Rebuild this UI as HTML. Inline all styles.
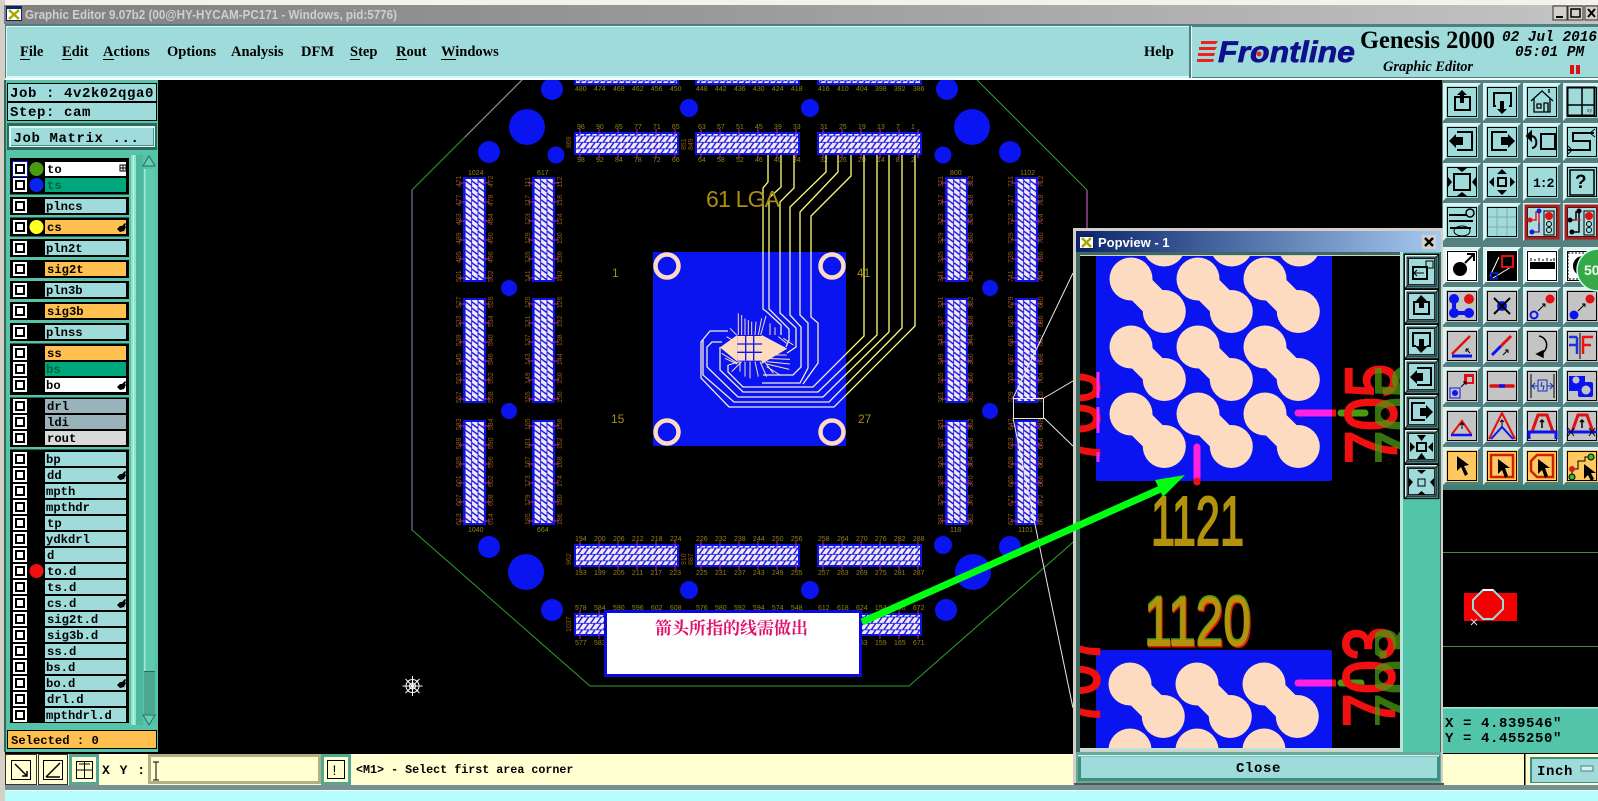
<!DOCTYPE html>
<html><head><meta charset="utf-8"><title>Graphic Editor</title>
<style>
html,body{margin:0;padding:0;background:#000;width:1598px;height:801px;overflow:hidden}
svg{display:block}
.m{font-family:"Liberation Mono",monospace;font-weight:bold;fill:#000}
.mn{font-size:14px;letter-spacing:.6px}
.r{font-size:12.2px}
.s{font-family:"Liberation Serif",serif;font-weight:bold;font-size:14.5px;fill:#000}
.l{font-family:"Liberation Sans",sans-serif;font-size:7px;fill:#8f8210}
.l2{font-family:"Liberation Sans",sans-serif;font-size:7px;fill:#8f5a10}
.lb{font-family:"Liberation Sans",sans-serif;font-size:12px;fill:#a88d10}
.pd{font-family:"Liberation Sans",sans-serif;font-size:70px}
</style></head><body>
<svg width="1598" height="801" viewBox="0 0 1598 801" xmlns="http://www.w3.org/2000/svg">
<defs>
<linearGradient id="tg" x1="0" x2="1" y1="0" y2="0"><stop offset="0" stop-color="#808080"/><stop offset=".45" stop-color="#9a9a9a"/><stop offset="1" stop-color="#c4c4c4"/></linearGradient>
<linearGradient id="pg" x1="0" x2="1" y1="0" y2="0"><stop offset="0" stop-color="#0a246a"/><stop offset="1" stop-color="#a6caf0"/></linearGradient>
<pattern id="ph" width="6.3" height="6.4" patternUnits="userSpaceOnUse" x="574" y="132"><rect width="6.3" height="6.4" fill="#0a14e8"/><path d="M-2 6L2 .4H6.600L2.600 6ZM4.300 6L8.300 .4H12.900L8.900 6Z" fill="#f6e6ec"/></pattern>
<pattern id="pv" width="6.4" height="6.3" patternUnits="userSpaceOnUse" x="463" y="177"><rect width="6.4" height="6.3" fill="#0a14e8"/><path d="M.4 -2L6 2V6.600L.4 2.600ZM.4 4.300L6 8.300V12.900L.4 8.900Z" fill="#f6e6ec"/></pattern>
<g id="hp"><rect width="105" height="23" fill="#0a14e8"/><rect x="2" y="2" width="101" height="19" fill="url(#ph)"/><path d="M6 -3V3M25 -3V3M44 -3V3M63 -3V3M82 -3V3M101 -3V3M6 20V26M25 20V26M44 20V26M63 20V26M82 20V26M101 20V26" stroke="#b020d0"/></g>
<g id="vp"><rect width="23" height="105" fill="#0a14e8"/><rect x="2" y="2" width="19" height="101" fill="url(#pv)"/><path d="M-4 6H3M-4 25H3M-4 44H3M-4 63H3M-4 82H3M-4 101H3M20 6H27M20 25H27M20 44H27M20 63H27M20 82H27M20 101H27" stroke="#b020d0"/></g>
<g id="bt"><rect width="38" height="38" fill="#4f7f7f"/><path d="M0 0H38L35 3H3V35L0 38Z" fill="#d8f4f4"/><rect x="3" y="3" width="32" height="32" fill="currentColor"/><rect x="4.500" y="4.500" width="29" height="29" fill="none" stroke="#000"/></g>
<g id="cb"><rect width="14" height="14" fill="#fff"/><rect x="3" y="3" width="8" height="8" fill="#fff" stroke="#000" stroke-width="2"/></g>
<path id="hd" d="M0 6L3 3L5 3L8 0L9 1L8 3L9 4L7 8L3 9Z" fill="#000"/>
<g id="dumb"><path d="M0 0L33 33" stroke="#fddbc0" stroke-width="29"/><circle r="21.500" fill="#fddbc0"/><circle cx="33.300" cy="32.500" r="21.500" fill="#fddbc0"/></g>
<g id="tr" fill="none" stroke-width="1.300">
<path d="M768 155V182L763 188V309L767 312L781 325V335"/>
<path d="M781 155V187L769 198V309L789 329V340L786 347"/>
<path d="M794 155V188L780 202V313L796 328V347L787 353"/>
<path d="M826 155V172L790 207V315L801 327V367L793 375H763"/>
<path d="M838 155V172L800 212V315L808 323V368L800 383H762"/>
<path d="M851 155V176L811 216V317L818 323V363L803 384"/>
<path d="M864 155V336L813 387H743L728 372V365"/>
<path d="M877 155V335L818 392H743L720 370V347"/>
<path d="M889 155V332L823 397H738L707 367V347L712 342H722"/>
<path d="M902 155V328L829 402H734L703 375V340"/>
<path d="M915 155V326L834 407H729L701 378V342L710 331H728"/>
</g>
<clipPath id="cb1"><rect x="653" y="252" width="193" height="194"/></clipPath>
<clipPath id="cp"><rect x="1080" y="256" width="320" height="492"/></clipPath>
<clipPath id="cr"><rect x="1375" y="256" width="25" height="492"/></clipPath>
</defs>

<!-- base -->
<rect width="1598" height="801" fill="#000"/>
<rect width="1598" height="5" fill="#f4f2ea"/>
<rect y="0" width="5" height="801" fill="#d4d0c8"/>
<rect x="4" y="5" width="1594" height="19" fill="url(#tg)"/>
<rect x="6" y="6" width="16" height="15" fill="#0a246a"/><rect x="7" y="9" width="14" height="11" fill="#fff"/><path d="M9 10L19 19M19 10L9 19" stroke="#a8a800" stroke-width="2.500"/>
<text x="25" y="19" font-family="Liberation Sans,sans-serif" font-weight="bold" font-size="12.500" fill="#cfcfcf" textLength="372" lengthAdjust="spacingAndGlyphs">Graphic Editor 9.07b2 (00@HY-HYCAM-PC171 - Windows, pid:5776)</text>
<g><rect x="1553" y="6" width="14" height="14" fill="#d4d0c8" stroke="#333"/><rect x="1556" y="16" width="7" height="2" fill="#000"/><rect x="1568" y="6" width="15" height="14" fill="#d4d0c8" stroke="#333"/><rect x="1571" y="9" width="9" height="8" fill="none" stroke="#000" stroke-width="1.500"/><rect x="1585" y="6" width="13" height="14" fill="#d4d0c8" stroke="#333"/><path d="M1588 9L1595 17M1595 9L1588 17" stroke="#000" stroke-width="2"/></g>

<!-- menu -->
<rect x="5" y="24" width="1593" height="56" fill="#4f7f7f"/>
<rect x="6" y="26" width="1185" height="52" fill="#dff6f6"/>
<rect x="7" y="27" width="1183" height="49" fill="#9fdbdb"/>
<rect x="1189" y="26" width="2" height="52" fill="#4f7f7f"/>
<rect x="1191" y="26" width="1" height="53" fill="#e4ffff"/>
<rect x="1192" y="27" width="406" height="50" fill="#9fdbdb"/>
<rect x="5" y="78" width="1593" height="2" fill="#f0ffff"/>
<text class="s" x="20" y="56">File</text><text class="s" x="62" y="56">Edit</text><text class="s" x="103" y="56">Actions</text><text class="s" x="167" y="56">Options</text><text class="s" x="231" y="56">Analysis</text><text class="s" x="301" y="56">DFM</text><text class="s" x="350" y="56">Step</text><text class="s" x="396" y="56">Rout</text><text class="s" x="441" y="56">Windows</text><text class="s" x="1144" y="56">Help</text>
<path d="M20 59.500h10M62 59.500h10M103 59.500h11M350 59.500h10M396 59.500h11M441 59.500h15" stroke="#000"/>
<!-- logo -->
<path d="M1201 41H1218L1216 44H1201ZM1199 47H1217L1215 50H1199ZM1198 53H1215L1214 56H1198ZM1197 59H1214L1213 62H1197Z" fill="#f02020"/>
<text x="1218" y="62" font-family="Liberation Sans,sans-serif" font-weight="bold" font-style="italic" font-size="30" fill="#10108c" stroke="#10108c" stroke-width=".7" textLength="137" lengthAdjust="spacingAndGlyphs">Frontline</text>
<circle cx="1259" cy="54" r="2.500" fill="#f02020"/>
<text x="1360" y="48" font-family="Liberation Serif,serif" font-weight="bold" font-size="25" fill="#000" textLength="135" lengthAdjust="spacingAndGlyphs">Genesis 2000</text>
<text x="1383" y="71" font-family="Liberation Serif,serif" font-weight="bold" font-style="italic" font-size="14.500" fill="#000" textLength="90" lengthAdjust="spacingAndGlyphs">Graphic Editor</text>
<text x="1502" y="41" font-family="Liberation Mono,monospace" font-weight="bold" font-style="italic" font-size="14.400" fill="#000">02 Jul 2016</text>
<text x="1515" y="56" font-family="Liberation Mono,monospace" font-weight="bold" font-style="italic" font-size="14.400" fill="#000">05:01 PM</text>
<rect x="1570" y="65" width="4" height="9" fill="#e01010"/><rect x="1576" y="65" width="4" height="9" fill="#e01010"/>

<!-- left panel -->
<rect x="5" y="80" width="153" height="672" fill="#57c4aa"/>
<rect x="4" y="80" width="2" height="672" fill="#2e6a58"/>
<rect x="7.500" y="83.500" width="149" height="18" fill="#9fdbdb" stroke="#000"/>
<rect x="7.500" y="102.500" width="149" height="18" fill="#9fdbdb" stroke="#000"/>
<text class="m mn" x="10" y="97">Job : 4v2k02qga0</text>
<text class="m mn" x="10" y="116">Step: cam</text>
<rect x="7" y="123" width="150" height="27" fill="#2e6a58"/>
<rect x="9" y="126" width="146" height="21" fill="#d8f8f8"/><rect x="11" y="128" width="143" height="18" fill="#4f8f8f"/><rect x="11" y="128" width="142" height="17" fill="#9fdbdb"/>
<text class="m mn" x="13.500" y="142">Job Matrix ...</text>

<!-- list -->
<rect x="10" y="158" width="119" height="565" fill="#000"/>
<g fill="#57c4aa"><rect x="10" y="194.500" width="119" height="2.500"/><rect x="10" y="215" width="119" height="2.500"/><rect x="10" y="236.500" width="119" height="2.500"/><rect x="10" y="257" width="119" height="3"/><rect x="10" y="278" width="119" height="3"/><rect x="10" y="299" width="119" height="3"/><rect x="10" y="320" width="119" height="3"/><rect x="10" y="341" width="119" height="2.500"/><rect x="10" y="395" width="119" height="2.500"/><rect x="10" y="447" width="119" height="2.500"/></g>
<rect x="129" y="155" width="2" height="570" fill="#57c4aa"/>
<rect x="131" y="155" width="5" height="570" fill="#8de4c8"/><rect x="133" y="155" width="1" height="570" fill="#c0f4e4"/>
<rect x="136" y="155" width="7" height="570" fill="#4fb89c"/>
<rect x="143" y="155" width="13" height="570" fill="#52c4aa"/>
<rect x="144" y="169" width="11" height="503" fill="#5fcab0"/><rect x="144" y="169" width="1.500" height="503" fill="#9aecd4"/><rect x="144" y="671" width="11" height="1.500" fill="#2e6a58"/>
<rect x="144" y="672" width="11" height="42" fill="#4aa88e"/>
<path d="M149 156L155 166H143Z" fill="#6ad0b4" stroke="#2e6a58"/>
<path d="M149 725L155 715H143Z" fill="#6ad0b4" stroke="#2e6a58"/>

<!-- rows -->
<g>
<rect x="45" y="162" width="81" height="14" fill="#fff"/><rect x="45" y="178" width="81" height="14" fill="#00a67c"/>
<rect x="45" y="199" width="81" height="14" fill="#9fdbdb"/><rect x="45" y="220" width="81" height="14" fill="#ffc050"/>
<rect x="45" y="241" width="81" height="14" fill="#9fdbdb"/><rect x="45" y="262" width="81" height="14" fill="#ffc050"/>
<rect x="45" y="283" width="81" height="14" fill="#9fdbdb"/><rect x="45" y="304" width="81" height="14" fill="#ffc050"/>
<rect x="45" y="325" width="81" height="14" fill="#9fdbdb"/>
<rect x="45" y="346" width="81" height="14" fill="#ffc050"/><rect x="45" y="362" width="81" height="14" fill="#00a67c"/><rect x="45" y="378" width="81" height="14" fill="#fff"/>
<rect x="45" y="399" width="81" height="14" fill="#9ab2ba"/><rect x="45" y="415" width="81" height="14" fill="#9ab2ba"/><rect x="45" y="431" width="81" height="14" fill="#dadada"/>
<path fill="#9fdbdb" d="M45 452h81v14h-81zM45 468h81v14h-81zM45 484h81v14h-81zM45 500h81v14h-81zM45 516h81v14h-81zM45 532h81v14h-81zM45 548h81v14h-81zM45 564h81v14h-81zM45 580h81v14h-81zM45 596h81v14h-81zM45 612h81v14h-81zM45 628h81v14h-81zM45 644h81v14h-81zM45 660h81v14h-81zM45 676h81v14h-81zM45 692h81v14h-81zM45 708h81v14h-81z"/>
</g>
<g>
<rect x="12" y="161" width="16" height="16" fill="#0016c8"/>
<use href="#cb" x="13" y="162"/><use href="#cb" x="13" y="178"/><use href="#cb" x="13" y="199"/><use href="#cb" x="13" y="220"/><use href="#cb" x="13" y="241"/><use href="#cb" x="13" y="262"/><use href="#cb" x="13" y="283"/><use href="#cb" x="13" y="304"/><use href="#cb" x="13" y="325"/><use href="#cb" x="13" y="346"/><use href="#cb" x="13" y="362"/><use href="#cb" x="13" y="378"/><use href="#cb" x="13" y="399"/><use href="#cb" x="13" y="415"/><use href="#cb" x="13" y="431"/><use href="#cb" x="13" y="452"/><use href="#cb" x="13" y="468"/><use href="#cb" x="13" y="484"/><use href="#cb" x="13" y="500"/><use href="#cb" x="13" y="516"/><use href="#cb" x="13" y="532"/><use href="#cb" x="13" y="548"/><use href="#cb" x="13" y="564"/><use href="#cb" x="13" y="580"/><use href="#cb" x="13" y="596"/><use href="#cb" x="13" y="612"/><use href="#cb" x="13" y="628"/><use href="#cb" x="13" y="644"/><use href="#cb" x="13" y="660"/><use href="#cb" x="13" y="676"/><use href="#cb" x="13" y="692"/><use href="#cb" x="13" y="708"/>
</g>
<circle cx="36.500" cy="169" r="7" fill="#4a9a10"/><circle cx="36.500" cy="185" r="7" fill="#0a24f0"/><circle cx="36.500" cy="227" r="7" fill="#ffff20"/><circle cx="36.500" cy="571" r="7" fill="#f01010"/>
<g class="m r">
<text x="47" y="173">to</text><text x="47" y="189" style="fill:#063">ts</text><text x="46" y="210">plncs</text><text x="47" y="231">cs</text><text x="46" y="252">pln2t</text><text x="47" y="273">sig2t</text><text x="46" y="294">pln3b</text><text x="47" y="315">sig3b</text><text x="46" y="336">plnss</text>
<text x="47" y="357">ss</text><text x="46" y="373" style="fill:#063">bs</text><text x="46" y="389">bo</text><text x="47" y="410">drl</text><text x="47" y="426">ldi</text><text x="47" y="442">rout</text>
<text x="46" y="463">bp</text><text x="47" y="479">dd</text><text x="46" y="495">mpth</text><text x="46" y="511">mpthdr</text><text x="47" y="527">tp</text><text x="46" y="543">ydkdrl</text><text x="47" y="559">d</text><text x="47" y="575">to.d</text><text x="47" y="591">ts.d</text><text x="47" y="607">cs.d</text><text x="47" y="623">sig2t.d</text><text x="47" y="639">sig3b.d</text><text x="47" y="655">ss.d</text><text x="46" y="671">bs.d</text><text x="46" y="687">bo.d</text><text x="47" y="703">drl.d</text><text x="46" y="719">mpthdrl.d</text>
</g>
<rect x="120" y="165" width="6" height="6" fill="none" stroke="#000"/><path d="M123 165v6M120 168h6" stroke="#000"/>
<use href="#hd" x="117" y="223"/><use href="#hd" x="117" y="381"/><use href="#hd" x="117" y="471"/><use href="#hd" x="117" y="599"/><use href="#hd" x="117" y="679"/>
<rect x="7.500" y="730.500" width="149" height="18" fill="#ffc050" stroke="#000"/>
<text class="m r" x="11" y="744">Selected : 0</text>

<!-- canvas PCB -->
<rect x="158" y="80" width="1285" height="673" fill="#000"/>
<g fill="none">
<path d="M522 80L412 190" stroke="#2fa02f"/><path d="M522 80L465 137" stroke="#a08a9a"/>
<path d="M412 190V530L590 686H909L1087 530" stroke="#2fa02f"/><path d="M412 190V530" stroke="#a080b0"/>
<path d="M977 80L1087 190" stroke="#2fa02f"/><path d="M1087 190V228" stroke="#e070e0"/>
</g>
<g fill="#0a14f0">
<circle cx="552" cy="89" r="11"/><circle cx="527" cy="127" r="18"/><circle cx="489" cy="152" r="11"/><circle cx="556" cy="155" r="8.500"/><circle cx="689" cy="108" r="9"/><circle cx="810" cy="108" r="9"/><circle cx="947" cy="89" r="11"/><circle cx="972" cy="127" r="18"/><circle cx="1010" cy="152" r="11"/><circle cx="943" cy="155" r="8.500"/>
<circle cx="489" cy="547" r="11"/><circle cx="526" cy="572" r="18"/><circle cx="552" cy="610" r="11"/><circle cx="689" cy="590" r="9"/><circle cx="810" cy="590" r="9"/><circle cx="943" cy="545" r="9"/><circle cx="946" cy="610" r="11"/><circle cx="973" cy="572" r="18"/><circle cx="1010" cy="547" r="11"/><circle cx="509" cy="288" r="8"/><circle cx="509" cy="411" r="8"/><circle cx="990" cy="288" r="8"/><circle cx="990" cy="411" r="8"/>
</g>
<rect x="158" y="78" width="1285" height="2" fill="#f0ffff"/>
<!-- pads -->
<use href="#hp" x="574" y="132"/><use href="#hp" x="695" y="132"/><use href="#hp" x="817" y="132"/>
<use href="#hp" x="574" y="544"/><use href="#hp" x="695" y="544"/><use href="#hp" x="817" y="544"/>
<use href="#hp" x="574" y="613"/><use href="#hp" x="695" y="613"/><use href="#hp" x="817" y="613"/>
<path d="M574 80h105v5h-105zM695 80h105v5h-105zM817 80h105v5h-105z" fill="#0a14e8"/><path d="M576 80h101v3h-101zM697 80h101v3h-101zM819 80h101v3h-101z" fill="url(#ph)"/>
<use href="#vp" x="463" y="177"/><use href="#vp" x="463" y="298"/><use href="#vp" x="463" y="420"/>
<use href="#vp" x="532" y="177"/><use href="#vp" x="532" y="298"/><use href="#vp" x="532" y="420"/>
<use href="#vp" x="945" y="177"/><use href="#vp" x="945" y="298"/><use href="#vp" x="945" y="420"/>
<use href="#vp" x="1015" y="177"/><use href="#vp" x="1015" y="298"/><use href="#vp" x="1015" y="420"/>
<!-- labels -->
<g class="l">
<text x="575" y="91" style="word-spacing:5.350px">480 474 468 462 456 450</text><text x="696" y="91" style="word-spacing:5.350px">448 442 436 430 424 418</text><text x="818" y="91" style="word-spacing:5.350px">416 410 404 398 392 386</text>
<text x="577" y="129" style="word-spacing:9.250px">96 90 85 77 71 65</text><text x="698" y="129" style="word-spacing:9.250px">63 57 51 45 39 33</text><text x="820" y="129" style="word-spacing:9.250px">31 25 19 13 7 1</text>
<text x="577" y="162" style="word-spacing:9.250px">98 92 84 78 72 66</text><text x="698" y="162" style="word-spacing:9.250px">64 58 52 46 40 34</text><text x="820" y="162" style="word-spacing:9.250px">32 26 20 14 8 2</text>
<text x="575" y="541" style="word-spacing:5.350px">194 200 206 212 218 224</text><text x="696" y="541" style="word-spacing:5.350px">226 232 238 244 250 256</text><text x="818" y="541" style="word-spacing:5.350px">258 264 270 276 282 288</text>
<text x="575" y="575" style="word-spacing:5.350px">193 199 205 211 217 223</text><text x="696" y="575" style="word-spacing:5.350px">225 231 237 243 249 255</text><text x="818" y="575" style="word-spacing:5.350px">257 263 269 275 281 287</text>
<text x="575" y="610" style="word-spacing:5.350px">578 584 590 596 602 608</text><text x="696" y="610" style="word-spacing:5.350px">576 580 592 594 574 548</text><text x="818" y="610" style="word-spacing:5.350px">612 618 624 154 660 672</text>
<text x="575" y="645" style="word-spacing:5.350px">577 583 589 595 601 607</text><text x="856" y="645" style="word-spacing:5.350px">153 159 165 671</text>
<text x="468" y="175">1024</text><text x="537" y="175">617</text><text x="468" y="532">1040</text><text x="537" y="532">664</text><text x="950" y="175">800</text><text x="1020" y="175">1102</text><text x="950" y="532">118</text><text x="1018" y="532">1101</text>
</g>
<g class="l2" style="word-spacing:5.350px">
<text transform="translate(461,282) rotate(-90)">501 495 489 483 477 471</text><text transform="translate(461,403) rotate(-90)">557 551 545 539 533 527</text><text transform="translate(461,525) rotate(-90)">613 607 601 595 589 583</text>
<text transform="translate(493,282) rotate(-90)">502 496 490 484 478 472</text><text transform="translate(493,403) rotate(-90)">558 552 546 540 534 528</text><text transform="translate(493,525) rotate(-90)">614 608 602 596 590 584</text>
<text transform="translate(530,282) rotate(-90)">141 135 129 123 117 111</text><text transform="translate(530,403) rotate(-90)">155 149 143 137 131 125</text><text transform="translate(530,525) rotate(-90)">185 179 173 167 161 155</text>
<text transform="translate(562,282) rotate(-90)">142 136 130 124 118 112</text><text transform="translate(562,403) rotate(-90)">156 150 144 138 132 126</text><text transform="translate(562,525) rotate(-90)">186 180 174 168 162 156</text>
<text transform="translate(943,282) rotate(-90)">341 335 329 323 317 311</text><text transform="translate(943,403) rotate(-90)">361 355 349 343 337 331</text><text transform="translate(943,525) rotate(-90)">381 375 369 363 357 351</text>
<text transform="translate(973,282) rotate(-90)">342 336 330 324 318 312</text><text transform="translate(973,403) rotate(-90)">362 356 350 344 338 332</text><text transform="translate(973,525) rotate(-90)">382 376 370 364 358 352</text>
<text transform="translate(1013,282) rotate(-90)">741 735 729 723 717 711</text><text transform="translate(1013,403) rotate(-90)">709 703 697 691 685 679</text><text transform="translate(1013,525) rotate(-90)">677 671 665 659 653 647</text>
<text transform="translate(1043,282) rotate(-90)">742 736 730 724 718 712</text><text transform="translate(1043,403) rotate(-90)">710 704 698 692 686 680</text><text transform="translate(1043,525) rotate(-90)">678 672 666 660 654 648</text>
<text transform="translate(571,148) rotate(-90)">869</text><text transform="translate(686,150) rotate(-90)">851</text><text transform="translate(693,150) rotate(-90)">849</text><text transform="translate(571,565) rotate(-90)">962</text><text transform="translate(686,565) rotate(-90)">910</text><text transform="translate(693,565) rotate(-90)">887</text><text transform="translate(571,632) rotate(-90)">1037</text>
</g>
<!-- central -->
<rect x="653" y="252" width="193" height="194" fill="#0a14f0"/>
<g fill="#0a14f0" stroke="#fddbc0" stroke-width="4.500"><circle cx="667" cy="266" r="11.500"/><circle cx="832" cy="266" r="11.500"/><circle cx="667" cy="432" r="11.500"/><circle cx="832" cy="432" r="11.500"/></g>
<use href="#tr" stroke="#ffff78"/>
<g clip-path="url(#cb1)"><rect x="653" y="252" width="193" height="194" fill="#0a14f0"/>
<g fill="#0a14f0" stroke="#fddbc0" stroke-width="4.500"><circle cx="667" cy="266" r="11.500"/><circle cx="832" cy="266" r="11.500"/><circle cx="667" cy="432" r="11.500"/><circle cx="832" cy="432" r="11.500"/></g>
<use href="#tr" stroke="#f4ecd8"/></g>
<g transform="translate(630,240) scale(.33333)">
<path d="M270 322L322 285V365ZM395 285L472 326L395 372Z" fill="#fddbc0"/>
<rect x="322" y="288" width="74" height="74" fill="#fddbc0"/>
<path d="M347 288V362M371 288V362M322 312H396M322 337H396" stroke="#0a14f0" stroke-width="4"/>
<path d="M325 220V285M335 225V285M345 235V285M355 240V285M365 245V285M378 245L375 285M395 235L385 285M408 228L392 285M420 250V285M435 262V285M445 290L470 310M460 295L490 315M300 265L320 285M290 290L315 305M275 340L320 368M285 355L322 372M295 375L330 365M305 395L335 365M330 365V395M345 365V410M360 365V415M375 365L385 410M390 365L410 410M400 360L430 400M415 345L470 345M410 355L480 358M410 365L480 372M410 372L478 388M410 380L450 405" stroke="#fddbc0" stroke-width="3" fill="none"/>
</g>
<text x="706" y="207" font-family="Liberation Sans,sans-serif" font-size="23" fill="#a88d10" textLength="74">61 LGA</text>
<text class="lb" x="612" y="277">1</text><text class="lb" x="857" y="277">41</text><text class="lb" x="611" y="423">15</text><text class="lb" x="858" y="423">27</text>
<!-- selection box and lines -->
<path d="M1013 398L1073 273M1044 398L1073 381M1044 418L1073 446M1013 418L1073 708" stroke="#e8e8e8" fill="none"/>
<rect x="1013.500" y="398.500" width="30" height="20" fill="none" stroke="#e8e8e8"/>
<!-- text box -->
<rect x="605.500" y="611.500" width="255" height="64" fill="#fff" stroke="#0a0adc" stroke-width="3"/>
<text x="655" y="634" font-family="Liberation Serif,'Noto Serif CJK SC',serif" font-weight="bold" font-size="17" fill="#e0106a">箭头所指的线需做出</text>
<!-- crosshair -->
<g stroke="#fff" fill="none"><circle cx="412.500" cy="686" r="6.500"/><circle cx="412.500" cy="686" r="3"/><path d="M412.500 676V696M402.500 686H422.500M405.500 679L419.500 693M419.500 679L405.500 693"/></g>

<!-- right toolbar -->
<rect x="1442" y="80" width="156" height="410" fill="#57817f"/>
<g style="color:#9fdbdb">
<use href="#bt" x="1443" y="83"/><use href="#bt" x="1483" y="83"/><use href="#bt" x="1523" y="83"/><use href="#bt" x="1563" y="83"/>
<use href="#bt" x="1443" y="123"/><use href="#bt" x="1483" y="123"/><use href="#bt" x="1523" y="123"/><use href="#bt" x="1563" y="123"/>
<use href="#bt" x="1443" y="163"/><use href="#bt" x="1483" y="163"/><use href="#bt" x="1523" y="163"/><use href="#bt" x="1563" y="163"/>
<use href="#bt" x="1443" y="203"/><use href="#bt" x="1483" y="203"/></g>
<g style="color:#a8dce0"><use href="#bt" x="1523" y="203"/><use href="#bt" x="1563" y="203"/></g>
<rect x="1526" y="206" width="32" height="32" fill="none" stroke="#a82020" stroke-width="3"/><rect x="1566" y="206" width="32" height="32" fill="none" stroke="#a82020" stroke-width="3"/>
<g style="color:#fff"><use href="#bt" x="1443" y="247"/><use href="#bt" x="1483" y="247"/><use href="#bt" x="1523" y="247"/><use href="#bt" x="1563" y="247"/></g>
<g style="color:#c4c4c4">
<use href="#bt" x="1443" y="287"/><use href="#bt" x="1483" y="287"/><use href="#bt" x="1523" y="287"/><use href="#bt" x="1563" y="287"/>
<use href="#bt" x="1443" y="327"/><use href="#bt" x="1483" y="327"/><use href="#bt" x="1523" y="327"/><use href="#bt" x="1563" y="327"/>
<use href="#bt" x="1443" y="367"/><use href="#bt" x="1483" y="367"/><use href="#bt" x="1523" y="367"/><use href="#bt" x="1563" y="367"/>
<use href="#bt" x="1443" y="407"/><use href="#bt" x="1483" y="407"/><use href="#bt" x="1523" y="407"/><use href="#bt" x="1563" y="407"/></g>
<g style="color:#ffc860"><use href="#bt" x="1443" y="447"/><use href="#bt" x="1483" y="447"/><use href="#bt" x="1523" y="447"/><use href="#bt" x="1563" y="447"/></g>
<rect x="1442" y="485" width="156" height="5" fill="#3f7f72"/>

<!-- icons -->
<g fill="none" stroke="#000" stroke-width="2">
<g transform="translate(1443,83)"><rect x="12" y="14" width="15" height="13"/><path d="M19 7L24 12H21V20H17V12H14Z" fill="#000" stroke="none"/></g>
<g transform="translate(1483,83)"><path d="M13 23H11V10H28V23H26"/><path d="M19 31L14 26H17V18H21V26H24Z" fill="#000" stroke="none"/></g>
<g transform="translate(1523,83)" stroke-width="1.300"><path d="M8 18L19 8L30 18M11 16V29H27V16M14 21h4v4h-4zM21 20h4v9h-4zM26 10V6"/></g>
<g transform="translate(1563,83)"><rect x="4.500" y="4.500" width="27" height="28"/><path d="M5 22H32M19 5V32" stroke-width="1.500"/></g>
<g transform="translate(1443,123)"><path d="M14 9H29V27H14"/><path d="M6 18L13 11V14H20V22H13V25Z" fill="#000" stroke="none"/></g>
<g transform="translate(1483,123)"><path d="M24 9H9V27H24"/><path d="M32 18L25 11V14H18V22H25V25Z" fill="#000" stroke="none"/></g>
<g transform="translate(1523,123)"><rect x="18" y="11" width="14" height="15"/><path d="M8 13C15 13 15 25 9 25"/><path d="M8 9V17L4 13Z" fill="#000"/></g>
<g transform="translate(1563,123)"><path d="M31 10H10V18H27V27H5"/><path d="M32 6L27 10L32 14M5 23L9 27L5 31" stroke-width="1"/></g>
<g transform="translate(1443,163)"><rect x="11" y="11" width="16" height="16"/><path d="M19 9L14 5H24ZM19 29L14 33H24ZM9 19L5 14V24ZM29 19L33 14V24Z" fill="#000" stroke="none"/></g>
<g transform="translate(1483,163)"><rect x="15" y="15" width="8" height="8"/><path d="M19 6L14 11H24ZM19 32L14 27H24ZM6 19L11 14V24ZM32 19L27 14V24Z" fill="#000" stroke="none"/></g>
<g transform="translate(1563,163)"><rect x="7" y="7" width="24" height="25" stroke-width="1.500"/></g>
<g transform="translate(1443,203)" stroke-width="1.500"><path d="M6 12H24M6 18H30M7 25H28" stroke-width="2"/><circle cx="27" cy="10" r="4"/><ellipse cx="19" cy="28" rx="8" ry="5" stroke-width="1"/></g>
<g transform="translate(1483,203)" stroke="#8aa" stroke-width="1"><path d="M5 14H33M5 24H33M14 5V33M24 5V33"/></g>
<g transform="translate(1523,203)" stroke-width="1"><rect x="21" y="8" width="10" height="24" stroke="#000"/><path d="M5 17H13V9H16V29H8" stroke="#e02020" stroke-width="1.500"/><path d="M16 29V20" stroke="#1020e0"/><circle cx="26" cy="13" r="4" fill="#e01010" stroke="none"/><circle cx="26" cy="21" r="2.500"/><circle cx="26" cy="27" r="2.500"/><circle cx="7" cy="17" r="2.500" fill="#e01010" stroke="none"/><circle cx="16" cy="8" r="2.500" fill="#1020e0" stroke="none"/><circle cx="9" cy="29" r="2.500" fill="#1020e0" stroke="none"/></g>
<g transform="translate(1563,203)" stroke-width="1"><rect x="21" y="8" width="10" height="24"/><path d="M5 17H13V9H16V29H8" stroke="#000" stroke-width="1.500"/><path d="M9 17H18" stroke="#e02020"/><circle cx="26" cy="13" r="4" fill="#e01010" stroke="none"/><circle cx="26" cy="21" r="2.500"/><circle cx="26" cy="27" r="2.500"/><circle cx="7" cy="17" r="2.500" fill="#000" stroke="none"/><circle cx="16" cy="8" r="2.500" fill="#000" stroke="none"/><circle cx="9" cy="29" r="2.500" fill="#000" stroke="none"/></g>
<!-- row5 -->
<g transform="translate(1443,247)"><circle cx="17" cy="22" r="7" fill="#000" stroke="none"/><path d="M22 16L30 8M24 7H31V14" stroke-width="2"/></g>
<g transform="translate(1483,247)" stroke="none"><rect x="5" y="5" width="28" height="28" fill="#000"/><path d="M7 29L16 10M10 31L28 20" stroke="#fff" stroke-width="1" fill="none"/><rect x="19" y="9" width="11" height="11" fill="none" stroke="#e01010" stroke-width="2"/><rect x="8" y="26" width="6" height="6" fill="none" stroke="#1020e0" stroke-width="1.500"/></g>
<g transform="translate(1523,247)" stroke="none"><rect x="7" y="15" width="25" height="7" fill="#000"/><path d="M8 14V11M12 14V12M16 14V11M20 14V12M24 14V11M28 14V12M31 14V11" stroke="#000" stroke-width="1"/></g>
<g transform="translate(1563,247)"><rect x="5" y="6" width="27" height="26" stroke-dasharray="2 1.500" stroke-width="1"/><circle cx="20" cy="19" r="10" fill="#000" stroke="none"/></g>
<!-- row6 -->
<g transform="translate(1443,287)"><path d="M11 12V26H26" stroke="#0a14f0" stroke-width="4"/><circle cx="11" cy="12" r="5" fill="#0a14f0" stroke="none"/><circle cx="11" cy="26" r="5" fill="#0a14f0" stroke="none"/><circle cx="26" cy="26" r="5" fill="#0a14f0" stroke="none"/><circle cx="26" cy="12" r="5" fill="#e01010" stroke="none"/></g>
<g transform="translate(1483,287)"><circle cx="19" cy="19" r="5" fill="#0a14f0" stroke="none"/><path d="M11 11L27 27M27 11L11 27"/></g>
<g transform="translate(1523,287)"><circle cx="11" cy="28" r="3.500" stroke="#0a14f0"/><circle cx="27" cy="12" r="4.500" fill="#e01010" stroke="none"/><path d="M15 24L22 17M19 17H22V20" stroke-width="1"/></g>
<g transform="translate(1563,287)"><circle cx="11" cy="28" r="4.500" fill="#0a14f0" stroke="none"/><circle cx="27" cy="12" r="4.500" fill="#e01010" stroke="none"/><path d="M15 24L22 17M19 17H22V20" stroke-width="1"/></g>
<!-- row7 -->
<g transform="translate(1443,327)"><path d="M9 27L27 9" stroke="#e01010" stroke-width="2.500"/><path d="M9 29H29" stroke="#0a14f0" stroke-width="3"/><path d="M23 22L27 26M23 22V25M23 22H26" stroke-width="1"/></g>
<g transform="translate(1483,327)"><path d="M9 28L18 19" stroke="#0a14f0" stroke-width="3"/><path d="M18 19L28 9" stroke="#e01010" stroke-width="3"/><path d="M20 28L25 23M22 23H25V26" stroke-width="1"/></g>
<g transform="translate(1523,327)" stroke-width="1.500"><path d="M16 9C26 11 26 24 17 27"/><path d="M20 24V30L14 27Z" fill="#000"/></g>
<g transform="translate(1563,327)" stroke-width="2.500"><path d="M6 10H14M6 18H14M14 10V27" stroke="#2030e0"/><path d="M20 27V10H30M20 18H28" stroke="#f01010"/><path d="M17 6V32" stroke="#000" stroke-width="1"/></g>
<!-- row8 -->
<g transform="translate(1443,367)"><rect x="21" y="7" width="10" height="10" fill="#e01010" stroke="none"/><rect x="24" y="10" width="5" height="5" fill="#c4c4c4" stroke="none"/><rect x="7" y="21" width="10" height="10" stroke="#0a14f0" stroke-width="1"/><circle cx="12" cy="26" r="3" fill="#0a14f0" stroke="none"/><path d="M18 20L23 15M20 15H23V18" stroke-width="1"/></g>
<g transform="translate(1483,367)"><path d="M8 19H30" stroke="#e01010" stroke-width="3.500" stroke-linecap="round"/><path d="M16 19H22" stroke="#0a14f0" stroke-width="3.500"/></g>
<g transform="translate(1523,367)" stroke="#1030c0" stroke-width="1"><path d="M8 7V31M31 7V31" stroke="#000"/><rect x="15" y="13" width="9" height="11"/><path d="M9 19H15M24 19H30M12 16L9 19L12 22M27 16L30 19L27 22M19 15L18 19H21L20 23"/></g>
<g transform="translate(1563,367)" stroke="none"><rect x="6" y="9" width="16" height="15" fill="#0a14f0"/><rect x="15" y="15" width="15" height="15" rx="2" fill="#0a14f0"/><circle cx="13" cy="13" r="3.500" fill="#c4c4c4"/><circle cx="23" cy="23" r="4.500" fill="#c4c4c4"/></g>
<!-- row9 -->
<g transform="translate(1443,407)"><path d="M9 27L19 14L28 27" stroke="#e01010" stroke-width="2"/><path d="M8 28H29" stroke="#0a14f0" stroke-width="2.500"/><path d="M19 22V16M17 18L19 16L21 18" stroke-width="1"/></g>
<g transform="translate(1483,407)"><path d="M6 32L19 6L32 32" stroke="#e01010" stroke-width="2"/><path d="M8 32L19 20L30 32" stroke="#0a14f0" stroke-width="2"/><path d="M19 19V13M17 15L19 13L21 15" stroke-width="1"/></g>
<g transform="translate(1523,407)"><path d="M9 25L15 8H24L30 25" stroke="#e01010" stroke-width="3"/><path d="M6 32V25H33V32" stroke="#0a14f0" stroke-width="3"/><path d="M19 21V13M17 15L19 13L21 15" stroke-width="1.500"/></g>
<g transform="translate(1563,407)"><path d="M9 25L15 8H24L30 25" stroke="#e01010" stroke-width="3"/><path d="M4 25H34" stroke="#0a14f0" stroke-width="3"/><path d="M5 21L11 29M11 21L5 29M26 21L32 29M32 21L26 29" stroke-width="1"/><path d="M19 21V13M17 15L19 13L21 15" stroke-width="1.500"/></g>
<!-- row10 -->
<g transform="translate(1443,447)" stroke="none"><path d="M14 9L14 24L18 20L22 29L25 27L21 19L26 18Z" fill="#000"/></g>
<g transform="translate(1483,447)"><rect x="8" y="8" width="22" height="22" stroke="#d02000" stroke-width="2.500"/><path d="M15 12V27L19 23L22 31L25 29L22 21L27 21Z" fill="#000" stroke="none"/></g>
<g transform="translate(1523,447)"><path d="M14 8H30V30H14L8 24V14Z" stroke="#d02000" stroke-width="2.500"/><path d="M15 12V27L19 23L22 31L25 29L22 21L27 21Z" fill="#000" stroke="none"/></g>
<g transform="translate(1563,447)" stroke-width="1"><path d="M9 30V22H15V14H22V10H28"/><circle cx="9" cy="22" r="3" fill="#d02020" stroke="none"/><circle cx="28" cy="10" r="3" fill="#30c030" stroke="#000"/><circle cx="9" cy="30" r="3" fill="#30c030" stroke="#000"/><path d="M21 17V32L25 28L28 34L31 32L28 26L33 26Z" fill="#000" stroke="none"/></g>
</g>
<text x="1533" y="187" font-family="Liberation Mono,monospace" font-weight="bold" font-size="13" fill="#000" letter-spacing="-1">1:2</text>
<text x="1575" y="188" font-family="Liberation Sans,sans-serif" font-weight="bold" font-size="19" fill="#000">?</text>
<text x="1587" y="112" font-family="Liberation Sans,sans-serif" font-size="5" fill="#333">xy</text>
<circle cx="1598" cy="270" r="21" fill="#36a848" stroke="#cfe" stroke-width="1.500"/>
<text x="1584" y="275" font-family="Liberation Sans,sans-serif" font-weight="bold" font-size="14" fill="#eaffea">50</text>

<!-- right bottom view -->
<path d="M1443 552.500H1598M1443 646.500H1598" stroke="#4a8a30"/>
<rect x="1464" y="593" width="53" height="28" fill="#f40000"/>
<path d="M1483 590H1493L1503 600V609L1493 619H1483L1473 609V600Z" fill="#f40000" stroke="#a0d8d8" stroke-width="2"/>
<path d="M1483 590H1493" stroke="#fff" stroke-width="2"/>
<path d="M1471 619L1477 625M1477 619L1471 625" stroke="#ddd"/>
<rect x="1443" y="707" width="155" height="46" fill="#52c4aa"/>
<rect x="1443" y="707" width="155" height="1.500" fill="#a8e8d8"/>
<text class="m mn" x="1445" y="727">X = 4.839546"</text>
<text class="m mn" x="1445" y="742">Y = 4.455250"</text>

<!-- bottom bar -->
<rect x="5" y="753" width="1593" height="32" fill="#ffffd2"/>
<rect x="5" y="753" width="1593" height="1" fill="#000"/>
<rect x="5" y="785" width="1593" height="5" fill="#7a8f8f"/>
<rect x="5" y="790" width="1593" height="11" fill="#b6fefe"/>
<rect x="5" y="790" width="1593" height="1" fill="#e8ffff"/>
<g fill="none" stroke="#000">
<rect x="5.500" y="754.500" width="31" height="30" stroke="#333"/><rect x="38.500" y="754.500" width="29" height="30" stroke="#333"/>
<rect x="11.500" y="760.500" width="19" height="19"/><path d="M15 764L27 776M22 776H27V771" stroke-width="1.500"/>
<rect x="43.500" y="760.500" width="19" height="19"/><path d="M46 777L60 763M46 777H60" stroke-width="1.500"/>
</g>
<rect x="69" y="754" width="30" height="31" fill="#52a892"/><rect x="72" y="757" width="24" height="25" fill="#ffffd2"/>
<rect x="76.500" y="761.500" width="16" height="17" fill="none" stroke="#000"/><path d="M84.500 761V778M77 770H92M79 764H90" stroke="#000" fill="none"/>
<text class="m" x="102" y="774" font-size="13" letter-spacing="1">X Y :</text>
<rect x="149.500" y="755.500" width="170" height="27" fill="#ffffd2" stroke="#b0b080" stroke-width="3"/>
<path d="M156 762V780M153 762H159M153 780H159" stroke="#000" fill="none"/>
<rect x="321" y="754" width="30" height="31" fill="#52a892"/><rect x="324" y="757" width="24" height="25" fill="#ffffd2"/>
<rect x="327.500" y="760.500" width="17" height="18" fill="none" stroke="#000"/><text x="332.500" y="775" font-family="Liberation Sans,sans-serif" font-size="14" fill="#000">!</text>
<text class="m" x="356" y="773" font-size="11.700">&lt;M1&gt; - Select first area corner</text>
<rect x="1524" y="754" width="1.500" height="31" fill="#000"/>
<rect x="1530" y="757" width="68" height="26" fill="#3f8f80"/><rect x="1532" y="759" width="66" height="23" fill="#9fdbdb"/>
<text class="m mn" x="1537" y="775">Inch</text>
<rect x="1581" y="766" width="12" height="5" fill="#d4f0f0" stroke="#4f7f7f"/>

<!-- popup -->
<rect x="1073" y="228" width="370" height="556" fill="#d4d0c8"/>
<rect x="1074" y="783" width="370" height="2" fill="#555"/>
<rect x="1076" y="231" width="365" height="21" fill="url(#pg)"/>
<rect x="1079" y="234" width="15" height="15" fill="#0a246a"/><rect x="1080" y="237" width="13" height="11" fill="#fff"/><path d="M1082 238L1091 247M1091 238L1082 247" stroke="#a8a800" stroke-width="2.500"/>
<text x="1098" y="247" font-family="Liberation Sans,sans-serif" font-weight="bold" font-size="13" fill="#fff">Popview - 1</text>
<rect x="1422" y="235" width="14" height="14" fill="#d4d0c8"/><path d="M1425 238L1433 246M1433 238L1425 246" stroke="#000" stroke-width="2.500"/>
<rect x="1076" y="252" width="365" height="3" fill="#3f6a60"/>
<rect x="1076" y="255" width="4" height="498" fill="#3f6a60"/>
<rect x="1080" y="256" width="320" height="492" fill="#000"/>
<rect x="1400" y="252" width="3" height="500" fill="#b8e4dc"/>
<rect x="1403" y="252" width="37" height="500" fill="#52c4aa"/>
<rect x="1440" y="252" width="1" height="500" fill="#3f6a60"/>
<rect x="1080" y="748" width="323" height="2" fill="#b8e4dc"/>
<rect x="1076" y="752" width="365" height="31" fill="#6aa89a"/>
<rect x="1078" y="755" width="362" height="26" fill="#3f8f80"/><rect x="1078" y="755" width="361" height="1.500" fill="#cdf4f4"/><rect x="1081" y="757" width="356" height="21" fill="#9fdbdb"/>
<text class="m mn" x="1236" y="772">Close</text>
<!-- popup toolbar buttons -->
<g fill="none" stroke="#000">
<g style="color:#9fdbdb">
<rect x="1403.500" y="253.500" width="36" height="35" fill="#000" stroke="none"/><use href="#bt" transform="translate(1404.500,254.500) scale(.9)"/>
<rect x="1403.500" y="288.500" width="36" height="35" fill="#000" stroke="none"/><use href="#bt" transform="translate(1404.500,289.500) scale(.9)"/>
<rect x="1403.500" y="323.500" width="36" height="35" fill="#000" stroke="none"/><use href="#bt" transform="translate(1404.500,324.500) scale(.9)"/>
<rect x="1403.500" y="358.500" width="36" height="35" fill="#000" stroke="none"/><use href="#bt" transform="translate(1404.500,359.500) scale(.9)"/>
<rect x="1403.500" y="393.500" width="36" height="35" fill="#000" stroke="none"/><use href="#bt" transform="translate(1404.500,394.500) scale(.9)"/>
<rect x="1403.500" y="428.500" width="36" height="35" fill="#000" stroke="none"/><use href="#bt" transform="translate(1404.500,429.500) scale(.9)"/>
<rect x="1403.500" y="463.500" width="36" height="35" fill="#000" stroke="none"/><use href="#bt" transform="translate(1404.500,464.500) scale(.9)"/>
</g>
<g stroke-width="2">
<g transform="translate(1404,254)"><rect x="9" y="13" width="14" height="12"/><rect x="22" y="7" width="7" height="7" stroke-width="1"/><path d="M10 19H20M13 16L10 19L13 22" stroke-width="1"/></g>
<g transform="translate(1404,289)"><rect x="10" y="13" width="15" height="12"/><path d="M17 6L23 12H20V19H15V12H12Z" fill="#000" stroke="none"/></g>
<g transform="translate(1404,324)"><path d="M12 22H9V9H26V22H23"/><path d="M17 29L11 22H15V15H20V22H24Z" fill="#000" stroke="none"/></g>
<g transform="translate(1404,359)"><path d="M13 9H27V26H13"/><path d="M6 18L13 11V14H19V22H13V25Z" fill="#000" stroke="none"/></g>
<g transform="translate(1404,394)"><path d="M21 9H8V26H21"/><path d="M29 18L22 11V14H16V22H22V25Z" fill="#000" stroke="none"/></g>
<g transform="translate(1404,429)"><rect x="13" y="14" width="9" height="8"/><path d="M17.500 12L13 6H22ZM17.500 24L13 30H22ZM11 18L6 13V23ZM24 18L29 13V23Z" fill="#000" stroke="none"/></g>
<g transform="translate(1404,464)"><rect x="14" y="15" width="7" height="7" stroke-width="1"/><path d="M17.500 10L13 6H22ZM17.500 27L13 31H22ZM9 18L5 14V23ZM26 18L30 14V23Z" fill="#000" stroke="none"/></g>
</g>
</g>
<!-- popup canvas -->
<g clip-path="url(#cp)">
<rect x="1096" y="250" width="236" height="231" rx="2" fill="#0a14f0"/>
<circle cx="1164" cy="245" r="21.500" fill="#fddbc0"/><circle cx="1231.500" cy="245" r="21.500" fill="#fddbc0"/><circle cx="1299" cy="245" r="21.500" fill="#fddbc0"/>
<use href="#dumb" x="1131" y="279"/><use href="#dumb" x="1198" y="279"/><use href="#dumb" x="1265" y="279"/>
<use href="#dumb" x="1131" y="347"/><use href="#dumb" x="1198" y="347"/><use href="#dumb" x="1265" y="347"/>
<use href="#dumb" x="1131" y="414"/><use href="#dumb" x="1198" y="414"/><use href="#dumb" x="1265" y="414"/>
<path d="M1197 447V478" stroke="#ff20e0" stroke-width="7" stroke-linecap="round"/><path d="M1197 481V482" stroke="#f01010" stroke-width="7" stroke-linecap="round"/>
<path d="M1298 413H1332" stroke="#ff20e0" stroke-width="7" stroke-linecap="round"/><path d="M1332 413H1336" stroke="#f01010" stroke-width="7"/>
<path d="M1341 413H1365" stroke="#4a9a10" stroke-width="7" stroke-linecap="round"/>
<rect x="1096" y="650" width="236" height="110" rx="2" fill="#0a14f0"/>
<use href="#dumb" x="1130" y="684"/><use href="#dumb" x="1197" y="684"/><use href="#dumb" x="1264" y="684"/>
<circle cx="1130" cy="750" r="21.500" fill="#fddbc0"/><circle cx="1197" cy="750" r="21.500" fill="#fddbc0"/><circle cx="1264" cy="750" r="21.500" fill="#fddbc0"/>
<path d="M1298 683H1332" stroke="#ff20e0" stroke-width="7" stroke-linecap="round"/><path d="M1332 683H1336" stroke="#f01010" stroke-width="7"/>
<path d="M1341 683H1361" stroke="#4a9a10" stroke-width="7" stroke-linecap="round"/>
<!-- big numbers -->
<text class="pd" x="1151" y="545" fill="#b3920c" stroke="#b3920c" stroke-width="2" textLength="93" lengthAdjust="spacingAndGlyphs">1121</text>
<text class="pd" x="1145" y="646.500" fill="#f01010" stroke="#f01010" stroke-width="2" textLength="107" lengthAdjust="spacingAndGlyphs">1120</text>
<text class="pd" x="1144" y="644.500" fill="#4a9a10" stroke="#4a9a10" stroke-width="2" textLength="107" lengthAdjust="spacingAndGlyphs">1120</text>
<text class="pd" x="1144.500" y="645.500" fill="#b3920c" stroke="#b3920c" textLength="106" lengthAdjust="spacingAndGlyphs">1120</text>
<!-- rotated -->
<g font-family="Liberation Sans,sans-serif" font-size="72" fill="#f01010" stroke="#f01010" stroke-width="2.500">
<text transform="translate(1396,464) rotate(-90)" textLength="100" lengthAdjust="spacingAndGlyphs">705</text>
<text transform="translate(1394,727) rotate(-90)" textLength="100" lengthAdjust="spacingAndGlyphs">703</text>
<text transform="translate(1099,465) rotate(-90)" textLength="93" lengthAdjust="spacingAndGlyphs">700</text>
<text transform="translate(1099,727) rotate(-90)" textLength="94" lengthAdjust="spacingAndGlyphs">707</text>
</g>
<g clip-path="url(#cr)" font-family="Liberation Sans,sans-serif" font-size="72" fill="#4a9a10" stroke="#4a9a10" stroke-width="2.500" opacity=".75">
<text transform="translate(1425,464) rotate(-90)" textLength="100" lengthAdjust="spacingAndGlyphs">705</text>
<text transform="translate(1423,727) rotate(-90)" textLength="100" lengthAdjust="spacingAndGlyphs">703</text>
</g>
<path d="M1098 372V398M1098 407V433M1098 452V462" stroke="#f030f0" stroke-width="3"/>
</g>
<!-- green arrow -->
<path d="M862 622L1165 487" stroke="#00ff10" stroke-width="7"/>
<path d="M1185 475L1155 480L1163 497Z" fill="#00ff10"/>
</svg>
</body></html>
